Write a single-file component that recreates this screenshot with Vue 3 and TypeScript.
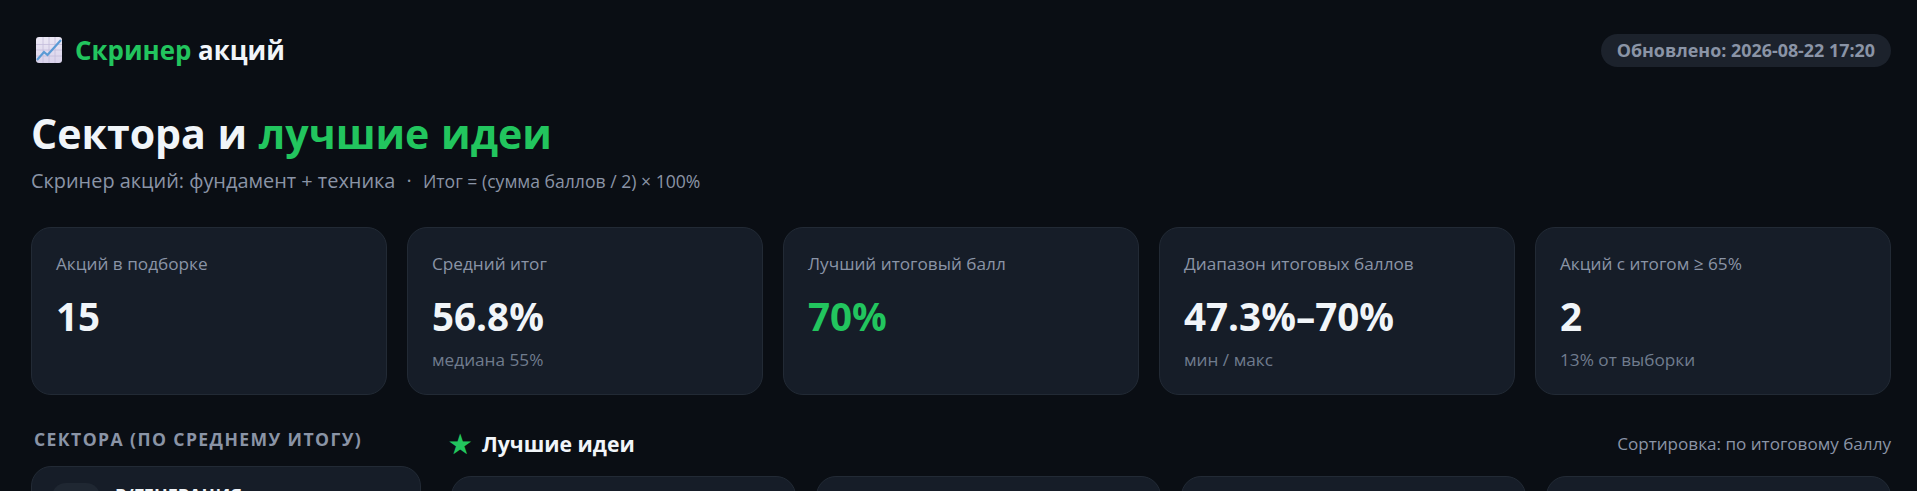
<script setup lang="ts">
interface Stat { label: string; value: string; sub?: string; accent?: boolean }
const stats: Stat[] = [
  { label: 'Акций в подборке', value: '15' },
  { label: 'Средний итог', value: '56.8%', sub: 'медиана 55%' },
  { label: 'Лучший итоговый балл', value: '70%', accent: true },
  { label: 'Диапазон итоговых баллов', value: '47.3%–70%', sub: 'мин / макс' },
  { label: 'Акций с итогом ≥ 65%', value: '2', sub: '13% от выборки' },
]
const ideas = [1, 2, 3, 4]
</script>

<template>
  <div class="page">
    <header class="topbar">
      <div class="brand">
        <svg class="chart" viewBox="0 0 28 28" width="28" height="28" aria-hidden="true">
          <defs>
            <linearGradient id="chartBg" x1="0" y1="0" x2="0" y2="1">
              <stop offset="0" stop-color="#ece8f5" />
              <stop offset="1" stop-color="#d9d2ea" />
            </linearGradient>
          </defs>
          <rect x="1" y="1" width="26" height="26" rx="3" fill="url(#chartBg)" />
          <path d="M1 8.5h26M1 14h26M1 20h26M8 1v26M14 1v26M20 1v26" stroke="#c4bcdb" stroke-width="0.8" />
          <path d="M2 24 L9 16 L12.5 19 L26 4" fill="none" stroke="#5b9bd5" stroke-width="2.2" />
        </svg>
        <span><span class="green">Скринер</span> акций</span>
      </div>
      <div class="pill">Обновлено: 2026-08-22 17:20</div>
    </header>

    <h1 class="title">Сектора и <span class="green">лучшие идеи</span></h1>
    <p class="subtitle">Скринер акций: фундамент + техника <span class="dot">·</span> <span class="formula">Итог = (сумма баллов / 2) × 100%</span></p>

    <section class="stats">
      <article v-for="s in stats" :key="s.label" class="stat">
        <div class="stat-label">{{ s.label }}</div>
        <div class="stat-value" :class="{ green: s.accent }">{{ s.value }}</div>
        <div v-if="s.sub" class="stat-sub">{{ s.sub }}</div>
      </article>
    </section>

    <section class="main">
      <aside class="side">
        <h2 class="side-title">СЕКТОРА (ПО СРЕДНЕМУ ИТОГУ)</h2>
        <div class="sector">
          <div class="sector-icon"></div>
          <div class="sector-name">Р/ГЕНЕРАЦИЯ</div>
        </div>
      </aside>
      <div class="content">
        <div class="content-head">
          <div class="content-title"><span class="star">★</span> Лучшие идеи</div>
          <div class="sort">Сортировка: по итоговому баллу</div>
        </div>
        <div class="ideas">
          <div v-for="i in ideas" :key="i" class="idea"></div>
        </div>
      </div>
    </section>
  </div>
</template>

<style>
html, body { margin: 0; background: #0a0e14; height: 491px; overflow: hidden; }
</style>

<style scoped>
.page {
  box-sizing: border-box;
  width: 1917px;
  height: 491px;
  overflow: hidden;
  padding: 0 26px 0 31px;
  background: #0a0e14;
  color: #f1f5f9;
  font-family: "Open Sans", "Noto Sans", sans-serif;
}
.green { color: #22c55e; }
.topbar {
  display: flex;
  align-items: center;
  justify-content: space-between;
  padding-top: 33px;
  height: 34px;
}
.brand {
  display: flex;
  align-items: center;
  gap: 12px;
  margin-left: 4px;
  font-size: 25.9px;
  font-weight: 700;
}
.chart { display: block; }
.pill {
  padding: 0 16px;
  height: 33px;
  line-height: 33px;
  border-radius: 17px;
  background: #1c222c;
  color: #8a94a6;
  font-size: 17.9px;
  font-weight: 700;
}
.title {
  margin: 38px 0 0;
  font-size: 41.1px;
  line-height: 56px;
  font-weight: 700;
  word-spacing: 1px;
}
.subtitle {
  margin: 7px 0 0;
  font-size: 19.9px;
  line-height: 26px;
  color: #8a94a6;
}
.dot { margin: 0 6px; }
.formula { font-size: 17.6px; }
.stats {
  display: grid;
  grid-template-columns: repeat(5, 1fr);
  gap: 20px;
  margin-top: 33px;
}
.stat {
  box-sizing: border-box;
  height: 168px;
  padding: 24px;
  border: 1px solid #222a35;
  border-radius: 20px;
  background: #161d28;
}
.stat-label { font-size: 17.2px; line-height: 24px; color: #8a94a6; }
.stat-value { margin-top: 15px; font-size: 38.6px; line-height: 50px; font-weight: 700; }
.stat-sub { margin-top: 8px; font-size: 17.2px; line-height: 22px; color: #707c8e; }
.main {
  display: grid;
  grid-template-columns: 390px 1fr;
  gap: 30px;
  margin-top: 33px;
}
.side-title {
  margin: 0 0 16px;
  padding-left: 3px;
  font-size: 17.6px;
  line-height: 22px;
  font-weight: 700;
  letter-spacing: 1.4px;
  color: #8a94a6;
}
.sector {
  display: flex;
  gap: 15px;
  padding: 16px 20px;
  border: 1px solid #222a35;
  border-radius: 20px;
  background: #161d28;
}
.sector-icon { width: 48px; height: 48px; border-radius: 14px; background: #1f2732; flex: none; }
.sector-name { font-size: 18px; font-weight: 700; line-height: 24px; }
.content-head {
  display: flex;
  align-items: center;
  justify-content: space-between;
  height: 30px;
  margin-bottom: 18px;
}
.content-title { display: flex; align-items: center; gap: 11px; font-size: 21.2px; font-weight: 700; }
.star { color: #22c55e; font-size: 25px; line-height: 30px; margin-left: -2px; }
.sort { font-size: 17.1px; color: #8a94a6; }
.ideas { display: grid; grid-template-columns: repeat(4, 1fr); gap: 20px; }
.idea {
  height: 200px;
  border: 1px solid #222a35;
  border-radius: 20px;
  background: #161d28;
}
</style>
